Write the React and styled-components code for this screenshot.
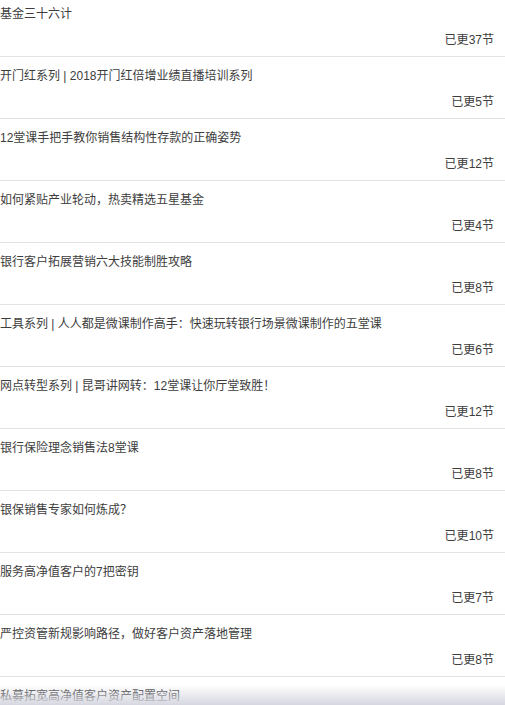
import React from "react";
import styled, { createGlobalStyle } from "styled-components";

const GlobalStyle = createGlobalStyle`
  html, body {
    margin: 0;
    padding: 0;
    background: #fff;
    overflow: hidden;
  }
  body {
    font-family: "Liberation Sans", "Noto Sans CJK SC", sans-serif;
  }
`;

const List = styled.ul`
  list-style: none;
  margin: -5px 0 0;
  padding: 0;
`;

const Item = styled.li`
  padding: 11px 11px 7px 0;
  border-bottom: 1px solid #e3e3e3;
  display: flex;
  flex-direction: column;
`;

const Title = styled.div`
  font-size: 12px;
  line-height: 17px;
  color: #3d3d3d;
  white-space: nowrap;
`;

const Count = styled.div`
  margin-top: 9px;
  font-size: 12px;
  line-height: 17px;
  color: #3d3d3d;
  text-align: right;
`;

const BottomShade = styled.div`
  position: fixed;
  left: 0;
  right: 0;
  bottom: 0;
  height: 20px;
  background: linear-gradient(rgba(255, 255, 255, 0), #d6d7e0);
  pointer-events: none;
`;

const courses = [
  { title: "基金三十六计", count: 37 },
  { title: "开门红系列 | 2018开门红倍增业绩直播培训系列", count: 5 },
  { title: "12堂课手把手教你销售结构性存款的正确姿势", count: 12 },
  { title: "如何紧贴产业轮动，热卖精选五星基金", count: 4 },
  { title: "银行客户拓展营销六大技能制胜攻略", count: 8 },
  { title: "工具系列 | 人人都是微课制作高手：快速玩转银行场景微课制作的五堂课", count: 6 },
  { title: "网点转型系列 | 昆哥讲网转：12堂课让你厅堂致胜！", count: 12 },
  { title: "银行保险理念销售法8堂课", count: 8 },
  { title: "银保销售专家如何炼成？", count: 10 },
  { title: "服务高净值客户的7把密钥", count: 7 },
  { title: "严控资管新规影响路径，做好客户资产落地管理", count: 8 },
  { title: "私募拓宽高净值客户资产配置空间", count: 6 },
];

const App = () => {
  return (
    <>
      <GlobalStyle />
      <List>
        {courses.map((c) => (
          <Item key={c.title}>
            <Title>{c.title}</Title>
            <Count>已更{c.count}节</Count>
          </Item>
        ))}
      </List>
      <BottomShade />
    </>
  );
};

export default App;
